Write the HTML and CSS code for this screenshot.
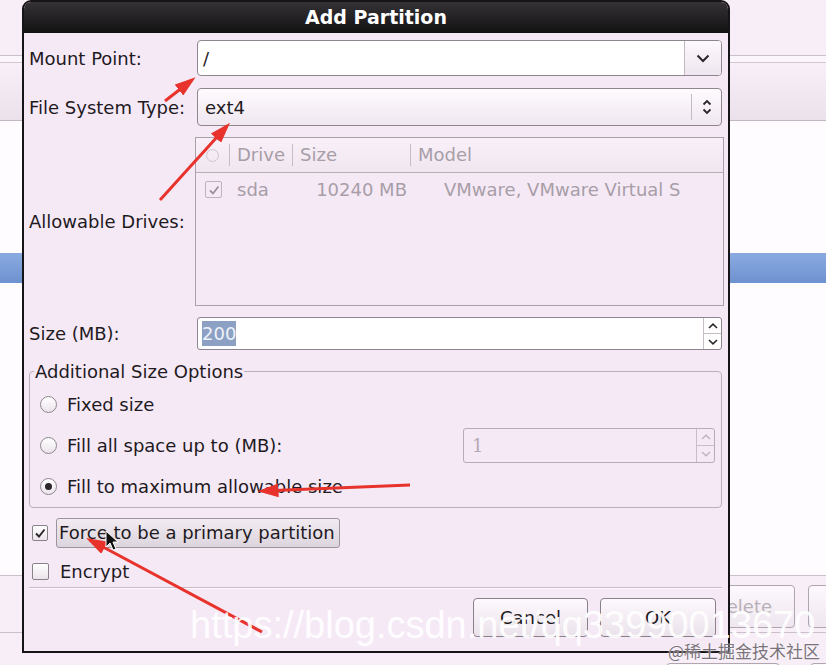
FILE: index.html
```html
<!DOCTYPE html>
<html>
<head>
  <meta charset="UTF-8">
  <title>Add Partition</title>
  <meta name="viewport" content="width=device-width, initial-scale=1.0">
  <link rel="stylesheet" href="styles.css">
</head>
<body>
  <!-- installer window behind the dialog -->
  <div class="installer">
    <div class="inst-top"></div>
    <div class="inst-rule"></div>
    <div class="inst-tabs"></div>
    <div class="list-top"></div>
    <div class="list-selected"></div>
    <div class="list-rest"></div>
    <div class="inst-buttons">
      <div class="inst-btn">Delete</div>
      <div class="inst-btn"></div>
    </div>
    <div class="inst-bottom">
      <div class="inst-btn small"></div>
      <div class="inst-btn small"></div>
    </div>
  </div>

  <div class="dialog">
    <div class="titlebar">Add Partition</div>
    <div class="dialog-body">

      <div class="form-row row-mount">
        <span class="field-label">Mount Point:</span>
        <div class="combo">
          <span class="entry-text">/</span>
          <span class="combo-btn">
            <svg width="14" height="9" viewBox="0 0 14 9"><path d="M1.5 1.5 L7 7 L12.5 1.5" fill="none" stroke="#2a262a" stroke-width="2"/></svg>
          </span>
        </div>
      </div>

      <div class="form-row row-fs">
        <span class="field-label">File System Type:</span>
        <div class="select">
          <span class="select-text">ext4</span>
          <span class="select-sep"></span>
          <span class="select-icon">
            <svg width="10" height="18" viewBox="0 0 10 18"><path d="M1.5 6.5 L5 3 L8.5 6.5 M1.5 11.5 L5 15 L8.5 11.5" fill="none" stroke="#2a262a" stroke-width="1.8"/></svg>
          </span>
        </div>
      </div>

      <div class="form-row row-drives">
        <span class="field-label">Allowable Drives:</span>
        <div class="tree">
          <div class="tree-head">
            <span class="th th-radio"><span class="radio-faint"></span></span>
            <span class="th">Drive</span>
            <span class="th">Size</span>
            <span class="th">Model</span>
          </div>
          <div class="tree-row">
            <span class="td"><span class="check disabled">
              <svg width="12" height="12" viewBox="0 0 12 12"><path d="M2 6.5 L5 9.5 L10.5 2.5" fill="none" stroke="#9a929a" stroke-width="1.8"/></svg>
            </span></span>
            <span class="td td-drive">sda</span>
            <span class="td td-size">10240 MB</span>
            <span class="td td-model">VMware, VMware Virtual S</span>
          </div>
        </div>
      </div>

      <div class="form-row row-size">
        <span class="field-label">Size (MB):</span>
        <div class="spin">
          <span class="spin-text"><span class="selection">200</span></span>
          <span class="spin-arrows">
            <span class="arrow"><svg width="10" height="6" viewBox="0 0 10 6"><path d="M1 5 L5 1.2 L9 5" fill="none" stroke="#2a262a" stroke-width="1.6"/></svg></span>
            <span class="arrow"><svg width="10" height="6" viewBox="0 0 10 6"><path d="M1 1 L5 4.8 L9 1" fill="none" stroke="#2a262a" stroke-width="1.6"/></svg></span>
          </span>
        </div>
      </div>

      <fieldset class="size-options">
        <legend>Additional Size Options</legend>
        <div class="opt">
          <span class="radio"></span>
          <span>Fixed size</span>
        </div>
        <div class="opt">
          <span class="radio"></span>
          <span>Fill all space up to (MB):</span>
          <div class="spin spin-off">
            <span class="spin-text mono">1</span>
            <span class="spin-arrows">
              <span class="arrow"><svg width="10" height="6" viewBox="0 0 10 6"><path d="M1 5 L5 1.2 L9 5" fill="none" stroke="#bdb3bd" stroke-width="1.4"/></svg></span>
              <span class="arrow"><svg width="10" height="6" viewBox="0 0 10 6"><path d="M1 1 L5 4.8 L9 1" fill="none" stroke="#bdb3bd" stroke-width="1.4"/></svg></span>
            </span>
          </div>
        </div>
        <div class="opt">
          <span class="radio on"></span>
          <span>Fill to maximum allowable size</span>
        </div>
      </fieldset>

      <div class="check-row row-force">
        <span class="check">
          <svg width="12" height="12" viewBox="0 0 12 12"><path d="M2 6.5 L5 9.5 L10.5 2.5" fill="none" stroke="#2a262a" stroke-width="1.9"/></svg>
        </span>
        <span class="focus-label">Force to be a primary partition</span>
      </div>

      <div class="check-row row-encrypt">
        <span class="check big"></span>
        <span>Encrypt</span>
      </div>

      <div class="separator"></div>

      <div class="buttons">
        <div class="btn btn-cancel">Cancel</div>
        <div class="btn btn-ok">OK</div>
      </div>
    </div>
  </div>

  <!-- red annotation arrows and cursor drawn over the screenshot -->
  <svg class="marks" width="826" height="665" viewBox="0 0 826 665">
    <defs>
      <marker id="head" markerWidth="7" markerHeight="4.6" refX="5.5" refY="2.3" orient="auto" markerUnits="strokeWidth">
        <path d="M0,0 L7,2.3 L0,4.6 z" fill="#e8332c"/>
      </marker>
    </defs>
    <line x1="165" y1="101" x2="192" y2="80" stroke="#e8332c" stroke-width="3" marker-end="url(#head)"/>
    <line x1="160" y1="200" x2="227" y2="126" stroke="#e8332c" stroke-width="3" marker-end="url(#head)"/>
    <line x1="410" y1="485" x2="262" y2="491" stroke="#e8332c" stroke-width="3" marker-end="url(#head)"/>
    <line x1="262" y1="632" x2="90" y2="540" stroke="#e8332c" stroke-width="3" marker-end="url(#head)"/>
    <polygon points="106,531 106,547 110,543 113,550 116,549 113,542 118,542" fill="#111" stroke="#fff" stroke-width="1"/>
  </svg>

  <div class="watermark">https://blog.csdn.net/qq33990013670</div>
  <div class="site-tag">@稀土掘金技术社区</div>
</body>
</html>
```

FILE: styles.css
```css
body { margin: 0; width: 826px; height: 665px; overflow: hidden; position: relative; background: #f8eef8; font-family: "DejaVu Sans", sans-serif; font-size: 18px; color: #1e1a1e; }

/* installer window in the background */
.installer { display: flex; flex-direction: column; height: 665px; }
.inst-top { height: 55px; flex: none; }
.inst-rule { height: 8px; flex: none; box-sizing: border-box; border-top: 1px solid #cbbfcb; border-bottom: 1px solid #d3c7d3; background: #fbf6fb; }
.inst-tabs { height: 58px; flex: none; box-sizing: border-box; border-bottom: 1px solid #c2b6c2; background: linear-gradient(#f8eff8, #ebe1eb); }
.list-top { height: 132px; flex: none; background: #fefcfe; }
.list-selected { height: 30px; flex: none; background: linear-gradient(#8aabe1, #6e92d0); }
.list-rest { height: 292px; flex: none; background: #fefcfe; }
.inst-buttons { height: 57px; flex: none; box-sizing: border-box; border-top: 1px solid #cbbfcb; display: flex; gap: 13px; padding: 9px 0 0 690px; }
.inst-btn { flex: none; width: 105px; height: 43px; box-sizing: border-box; border: 1px solid #b0a6b0; border-radius: 4px; background: linear-gradient(#fdf9fd, #efe6ef); color: #b8b0b8; display: flex; align-items: center; justify-content: center; }
.inst-bottom { flex: 1; box-sizing: border-box; border-top: 1px solid #cbbfcb; display: flex; gap: 30px; padding: 30px 0 0 666px; }
.inst-btn.small { width: 114px; height: 20px; }

/* dialog */
.dialog { position: absolute; left: 22px; top: 0; width: 708px; height: 653px; box-sizing: border-box; border: 2px solid #161416; border-radius: 9px 9px 0 0; background: #f6e9f6; overflow: hidden; }
.titlebar { height: 31px; line-height: 31px; background: linear-gradient(#353235, #121112); color: #fff; font-weight: bold; font-size: 19px; text-align: center; }
.dialog-body { padding: 0 6px 0 5px; }

.form-row { display: flex; align-items: center; }
.field-label { width: 168px; flex: none; }
.row-mount { margin-top: 7px; height: 36px; }
.row-fs { margin-top: 12px; height: 38px; }
.row-drives { margin-top: 11px; height: 169px; }
.row-size { margin-top: 11px; height: 33px; }

.combo { flex: 1; height: 100%; display: flex; box-sizing: border-box; border: 1px solid #8e868e; border-radius: 4px; background: #fff; overflow: hidden; }
.entry-text { flex: 1; padding-left: 5px; display: flex; align-items: center; }
.combo-btn { width: 36px; border-left: 1px solid #c3b9c3; background: linear-gradient(#fcf8fc, #efe6ef); display: flex; align-items: center; justify-content: center; }

.select { flex: 1; height: 100%; display: flex; align-items: center; box-sizing: border-box; border: 1px solid #8e868e; border-radius: 4px; background: linear-gradient(#fefbfe, #f0e7f0); }
.select-text { flex: 1; padding-left: 7px; }
.select-sep { width: 1px; height: 26px; background: #c4bac4; }
.select-icon { width: 29px; display: flex; justify-content: center; }

.tree { flex: 1; height: 100%; margin: 0 -2px; box-sizing: border-box; border: 1px solid #aaa0aa; color: #a79ea7; }
.tree-head, .tree-row { display: grid; grid-template-columns: 33px 63px 118px 1fr; align-items: center; }
.tree-head { height: 35px; box-sizing: border-box; border-bottom: 1px solid #b8aeb8; background: linear-gradient(#f9f0f9, #f0e6f0); }
.th { height: 22px; line-height: 22px; padding-left: 7px; border-left: 1px solid #c6bcc6; }
.th-radio { border-left: 0; padding-left: 0; display: flex; justify-content: center; align-items: center; }
.radio-faint { width: 13px; height: 13px; border-radius: 50%; border: 1px solid #cfc5cf; box-sizing: border-box; }
.tree-row { height: 33px; }
.tree-row .check { margin-left: 9px; }
.td-drive { padding-left: 8px; }
.td-size { text-align: right; padding-right: 3px; }
.td-model { padding-left: 34px; white-space: nowrap; }

.spin { flex: 1; height: 100%; display: flex; box-sizing: border-box; border: 1px solid #8e868e; border-radius: 3px; background: #fff; }
.spin-text { flex: 1; padding-left: 4px; display: flex; align-items: center; }
.selection { background: #8ca0c3; color: #eef2fa; line-height: 25px; }
.spin-arrows { width: 17px; border-left: 1px solid #c8bec8; display: flex; flex-direction: column; }
.arrow { flex: 1; display: flex; align-items: center; justify-content: center; }
.arrow + .arrow { border-top: 1px solid #c8bec8; }

.size-options { margin: 11px 0 0; padding: 2px 0 0; border: 1px solid #bbafbb; border-radius: 4px; }
.size-options legend { margin-left: 4px; padding: 0 1px; line-height: 21px; }
.opt { height: 41px; display: flex; align-items: center; gap: 10px; padding-left: 10px; }
.radio { width: 17px; height: 17px; flex: none; box-sizing: border-box; border: 1px solid #8e868e; border-radius: 50%; background: linear-gradient(#ffffff, #ebe4eb); display: flex; align-items: center; justify-content: center; }
.radio.on::after { content: ""; width: 7px; height: 7px; border-radius: 50%; background: #2a262a; }
.spin-off { flex: none; width: 252px; height: 35px; margin: 0 6px 0 auto; background: #f6e9f6; border-color: #b7adb7; color: #b3aab3; }
.spin-off .spin-text { padding-left: 8px; }
.mono { font-family: "DejaVu Serif", serif; }

.check-row { display: flex; align-items: center; }
.row-force { margin-top: 10px; height: 30px; }
.row-encrypt { margin-top: 12px; height: 23px; gap: 11px; }
.check { width: 16px; height: 16px; flex: none; box-sizing: border-box; border: 1px solid #8a828a; border-radius: 2px; background: linear-gradient(#ffffff, #ebe4eb); display: flex; align-items: center; justify-content: center; margin-left: 3px; }
.check.big { width: 17px; height: 17px; }
.check.disabled { width: 17px; height: 17px; border-color: #bdb3bd; background: #f6e9f6; }
.focus-label { margin-left: 8px; width: 284px; height: 30px; box-sizing: border-box; padding-left: 2px; line-height: 28px; border: 1px solid #9c949c; border-radius: 3px; background: linear-gradient(#f2ebf2, #ddd5dd); }

.separator { margin-top: 4px; border-top: 1px solid #c8bcc8; border-bottom: 1px solid #fdf9fd; }
.buttons { margin-top: 9px; display: flex; justify-content: flex-end; gap: 12px; padding-right: 6px; }
.btn { height: 39px; box-sizing: border-box; border: 1px solid #8a828a; border-radius: 4px; background: linear-gradient(#fdf9fd, #ebe2eb); display: flex; align-items: center; justify-content: center; }
.btn-cancel { width: 115px; }
.btn-ok { width: 116px; }

/* overlays */
.marks { position: absolute; left: 0; top: 0; pointer-events: none; }
.watermark { position: absolute; left: 190px; top: 604px; font-family: "Liberation Sans", Arial, sans-serif; font-size: 38px; color: rgba(255, 255, 255, 0.93); white-space: nowrap; }
.site-tag { position: absolute; right: 6px; bottom: 2px; font-family: "Noto Sans CJK SC", sans-serif; font-size: 17px; color: #7a747a; text-shadow: 0 0 2px #fff; }
```
